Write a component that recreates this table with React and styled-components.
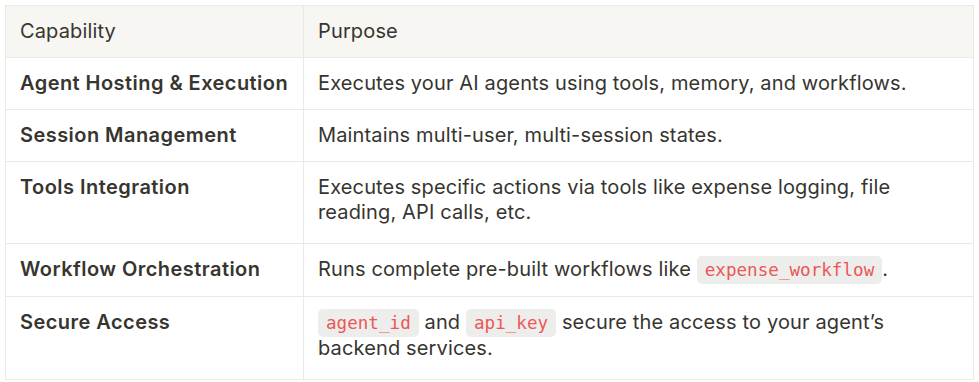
import React from 'react';
import styled, { createGlobalStyle } from 'styled-components';

const Global = createGlobalStyle`
body {
  margin: 0;
  background: #ffffff;
  font-family: Inter, "Noto Sans", sans-serif;
  color: #37352f;
}
`;

const Wrap = styled.div`
padding: 5px 5px 0 5px;
`;

const Table = styled.table`
width: 969px;
border-collapse: collapse;
table-layout: fixed;
font-size: 20px;
line-height: 25px;
letter-spacing: 0.14px;
`;

const HeadCell = styled.th`
box-sizing: border-box;
text-align: left;
font-weight: 400;
background: #f7f6f3;
border: 1px solid #e9e9e7;
padding: 13px 14px;
width: ${p => p.w || 'auto'};
`;

const Cell = styled.td`
border: 1px solid #e9e9e7;
padding: 13px 14px ${p => (p.wrap ? '18px' : '13px')} 14px;
vertical-align: top;
font-weight: ${p => (p.strong ? 600 : 400)};
letter-spacing: ${p => (p.strong ? '0.45px' : '0.14px')};
`;

const Code = styled.code`
font-family: "DejaVu Sans Mono", "Liberation Mono", monospace;
font-size: 17.6px;
letter-spacing: 0;
color: #eb5757;
background: rgba(135, 131, 120, 0.15);
border-radius: 5px;
padding: 4px 8px;
`;

const rows = [
  { name: 'Agent Hosting & Execution', text: 'Executes your AI agents using tools, memory, and workflows.' },
  { name: 'Session Management', text: 'Maintains multi-user, multi-session states.' },
  { name: 'Tools Integration', text: 'Executes specific actions via tools like expense logging, file reading, API calls, etc.', wrap: true },
  { name: 'Workflow Orchestration', text: <>Runs complete pre-built workflows like <Code>expense_workflow</Code>.</> },
  { name: 'Secure Access', text: <><Code>agent_id</Code> and <Code>api_key</Code> secure the access to your agent’s backend services.</>, wrap: true },
];

export default function App() {
  return (
    <Wrap>
      <Global />
      <Table>
        <thead>
          <tr>
            <HeadCell w="298px">Capability</HeadCell>
            <HeadCell>Purpose</HeadCell>
          </tr>
        </thead>
        <tbody>
          {rows.map(r => (
            <tr key={r.name}>
              <Cell strong wrap={r.wrap}>{r.name}</Cell>
              <Cell wrap={r.wrap}>{r.text}</Cell>
            </tr>
          ))}
        </tbody>
      </Table>
    </Wrap>
  );
}
